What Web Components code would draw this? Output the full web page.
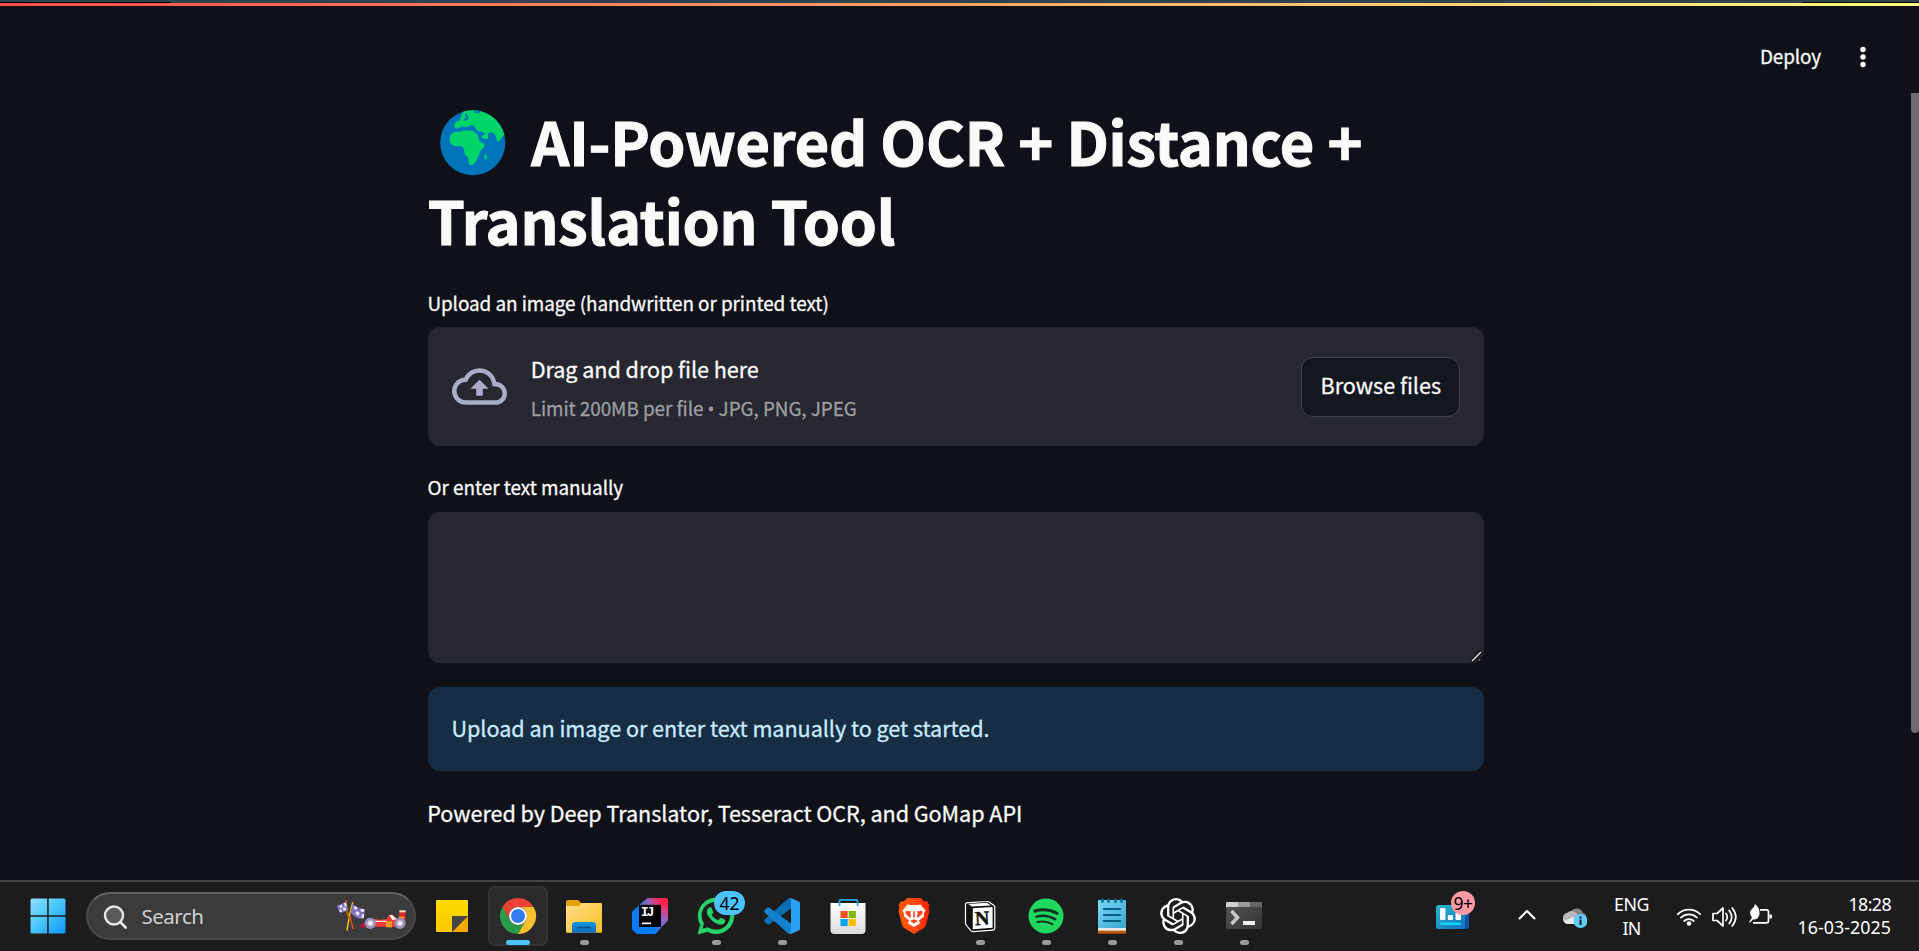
<!DOCTYPE html>
<html lang="en">
<head>
<meta charset="utf-8">
<title>AI-Powered OCR + Distance + Translation Tool</title>
<style>
html,body{margin:0;height:100%;background:#0e1117;overflow:hidden}
</style>
</head>
<body>
<desk-screen></desk-screen>
<script>
const define = (name, html, setup) => {
  const t = document.createElement('template');
  t.innerHTML = html;
  customElements.define(name, class extends HTMLElement {
    constructor() {
      super();
      this.attachShadow({mode: 'open'}).append(t.content.cloneNode(true));
    }
    connectedCallback() { if (setup) setup(this, this.shadowRoot); }
  });
};

/* One line of text whose tracking is adjusted to a given advance width. */
define('fit-text', `<style>:host{display:block;white-space:nowrap}span{display:inline-block}</style><span><slot></slot></span>`,
  (el, root) => {
    const span = root.querySelector('span');
    const want = parseFloat(el.getAttribute('w'));
    const n = el.textContent.length;
    const fit = () => {
      span.style.letterSpacing = '0px';
      const have = span.getBoundingClientRect().width;
      if (have) span.style.letterSpacing = ((want - have) / n) + 'px';
    };
    fit();
    requestAnimationFrame(fit);
  });

/* Taskbar and page artwork. */
const ICONS = {
  start: `<defs><linearGradient id="a" x1="0" y1="0" x2="36" y2="36" gradientUnits="userSpaceOnUse"><stop offset="0" stop-color="#8fe0ff"/><stop offset=".45" stop-color="#4cc9fb"/><stop offset="1" stop-color="#0a94f8"/></linearGradient></defs><path fill="url(#a)" d="M2 .5h15.200V17.200H.5V2A1.500 1.500 0 0 1 2 .5zM18.700.5H34A1.500 1.500 0 0 1 35.500 2v15.200H18.700zM.5 18.700h16.700v16.800H2A1.500 1.500 0 0 1 .5 34zM18.700 18.700h16.800V34a1.500 1.500 0 0 1-1.500 1.500H18.700z"/>`,
  sticky: `<defs><linearGradient id="a" x1="0" y1="0" x2="0" y2="1"><stop offset="0" stop-color="#ffdc00"/><stop offset="1" stop-color="#fbc800"/></linearGradient></defs><path fill="url(#a)" d="M3 2h30a1 1 0 0 1 1 1v15L18 34H3a1 1 0 0 1-1-1V3a1 1 0 0 1 1-1z"/><path fill="#f4a900" d="M34 18v15a1 1 0 0 1-1 1H18z"/><path fill="#454545" d="M18 34V19a1 1 0 0 1 1-1h15z"/>`,
  chrome: `<path fill="#ea4335" d="M18 9H33.600A18 18 0 0 0 2.400 9L10.200 22.500A9 9 0 0 1 18 9z"/><path fill="#2a9b48" d="M2.400 9A18 18 0 0 0 18 36L25.800 22.500A9 9 0 0 1 10.200 22.500z"/><path fill="#fbc02d" d="M18 9H33.600A18 18 0 0 1 18 36L25.800 22.500A9 9 0 0 0 18 9z"/><circle cx="18" cy="18" r="9" fill="#fff"/><circle cx="18" cy="18" r="7" fill="#2e7cee"/>`,
  folder: `<defs><linearGradient id="a" x1="0" y1="0" x2="1" y2="1"><stop offset="0" stop-color="#ffe08a"/><stop offset="1" stop-color="#fbbd20"/></linearGradient><linearGradient id="b" x1="0" y1="0" x2="0" y2="1"><stop offset="0" stop-color="#1597dc"/><stop offset="1" stop-color="#0a6cba"/></linearGradient></defs><path fill="#e3a008" d="M0 3.500A1.500 1.500 0 0 1 1.500 2h9.500c1 0 1.600.4 2.300 1.100L16 6v6H0z"/><path fill="url(#a)" d="M0 8h11.500c1 0 1.600-.4 2.300-1.100L15.500 5H35a1 1 0 0 1 1 1v27.500a1.300 1.300 0 0 1-1.300 1.300H1.300A1.300 1.300 0 0 1 0 33.500z"/><path fill="url(#b)" d="M6 34.800V27a3 3 0 0 1 3-3h18a3 3 0 0 1 3 3v7.800z"/><path stroke="#074f8c" stroke-width="1.500" d="M11 29.500h14"/>`,
  idea: `<defs><linearGradient id="a" x1="7" y1="8" x2="30" y2="3" gradientUnits="userSpaceOnUse"><stop offset="0" stop-color="#2d72e6"/><stop offset=".45" stop-color="#9a62b4"/><stop offset=".85" stop-color="#f52c62"/><stop offset="1" stop-color="#ff2350"/></linearGradient><linearGradient id="b" x1="33" y1="7" x2="27" y2="34" gradientUnits="userSpaceOnUse"><stop offset="0" stop-color="#ff2858"/><stop offset=".5" stop-color="#9a62c8"/><stop offset="1" stop-color="#3a78ee"/></linearGradient></defs><path fill="url(#a)" d="M7 7L14 1.200A3 3 0 0 1 16 0h18a2 2 0 0 1 2 2v8H7z"/><path fill="url(#b)" d="M28 7h8v15.500L24 35V28h4z"/><path fill="#087cfa" d="M0 14.500A2 2 0 0 1 .7 13L8 6.500V28h17.500v6L23.500 36H5L0 31.500z"/><path d="M7 6.800h22V29H7z"/><path fill="#fff" d="M10 24.500h9v1.700h-9z"/><text x="9" y="18.400" fill="#fff" font-family="Liberation Mono,monospace" font-weight="700" font-size="12.500" letter-spacing="-1.800">IJ</text>`,
  whatsapp: `<g transform="scale(1.500)" fill="#25d366"><path stroke="#25d366" stroke-width=".25" d="M17.472 14.382c-.297-.149-1.758-.867-2.030-.967-.273-.099-.471-.148-.67.15-.197.297-.767.966-.94 1.164-.173.199-.347.223-.644.075-.297-.15-1.255-.463-2.390-1.475-.883-.788-1.480-1.761-1.653-2.059-.173-.297-.018-.458.13-.606.134-.133.298-.347.446-.52.149-.174.198-.298.298-.497.099-.198.05-.371-.025-.52-.075-.149-.669-1.612-.916-2.207-.242-.579-.487-.5-.669-.51-.173-.008-.371-.01-.57-.01-.198 0-.52.074-.792.372-.272.297-1.040 1.016-1.040 2.479 0 1.462 1.065 2.875 1.213 3.074.149.198 2.096 3.200 5.077 4.487.709.306 1.262.489 1.694.625.712.227 1.360.195 1.871.118.571-.085 1.758-.719 2.006-1.413.248-.694.248-1.289.173-1.413-.074-.124-.272-.198-.57-.347"/><path stroke="#25d366" stroke-width=".5" d="M12.051 21.400a9.500 9.500 0 0 1-5.035-1.400l-.361-.214-4 1.050 1.050-3.900-.235-.374a9.500 9.500 0 0 1-1.400-4.800c.001-5.200 4.436-9.500 9.888-9.500 2.640 0 5.122 1.030 6.800 2.700a9.500 9.500 0 0 1 2.800 6.800c-.003 5.250-4.300 9.638-9.500 9.638M20.464 3.488A11.815 11.815 0 0 0 12.050 0C5.495 0 .16 5.335.157 11.892c0 2.096.547 4.142 1.588 5.945L.057 24l6.305-1.654a11.882 11.882 0 0 0 5.683 1.448h.005c6.554 0 11.890-5.335 11.893-11.893a11.821 11.821 0 0 0-3.480-8.413Z"/></g>`,
  vscode: `<path fill="#0b6cb4" d="M27 0v10.500L5.500 26.200a2 2 0 0 1-2.500-.1L.8 24a1.900 1.900 0 0 1 0-2.800L24 .800z"/><path fill="#1482cf" d="M27 36V25.500L5.500 9.700a2 2 0 0 0-2.500.1L.8 11.900a1.900 1.900 0 0 0 0 2.800L24 35.200z"/><path fill="#2aa2f2" d="M24.500.8C25.500 0 26.500-.3 27.500.2L35 3.800a1.800 1.800 0 0 1 1 1.600v25.200a1.800 1.800 0 0 1-1 1.600l-7.500 3.600c-1 .5-2 .2-3-.6 1 .5 2.500 0 2.500-1.600V2.400C27 .9 25.500.2 24.500.8z"/>`,
  store: `<defs><linearGradient id="a" x1="0" y1="0" x2="0" y2="1"><stop offset="0" stop-color="#fff"/><stop offset="1" stop-color="#dcdcdc"/></linearGradient></defs><path fill="url(#a)" d="M.5 5h35v27a4 4 0 0 1-4 4h-27a4 4 0 0 1-4-4z"/><path fill="none" stroke="#2ba5e0" stroke-width="1.800" d="M9.500 8V3A1.200 1.200 0 0 1 10.700 1.800h15.600A1.200 1.200 0 0 1 27.500 3v5"/><path fill="#f25022" d="M10.500 13h7.200v7h-7.200z"/><path fill="#7fba00" d="M18.700 13h7.200v7h-7.200z"/><path fill="#00a4ef" d="M10.500 21h7.200v7h-7.200z"/><path fill="#ffb900" d="M18.700 21h7.200v7h-7.200z"/>`,
  brave: `<defs><linearGradient id="a" x1="0" y1="0" x2="1" y2="0"><stop offset="0" stop-color="#ff5a00"/><stop offset=".5" stop-color="#ff4a12"/><stop offset="1" stop-color="#ff2000"/></linearGradient></defs><path fill="url(#a)" d="M11 0h14l3 3.500 3-.3 2.500 4-1 2.800 1 3-3.300 13.200c-.5 1.700-1.400 3-2.800 4L18 36l-9.400-5.800c-1.400-1-2.300-2.300-2.800-4L2.500 13l1-3-1-2.800 2.500-4 3 .3z"/><path fill="#fff" d="M11.500 6.500l3 .6h7l3-.6 5 5.900-1.800 3.600.5 2.200-5.200 4.200 1 3.200-6 3.400-6-3.400 1-3.200-5.200-4.200.5-2.200-1.800-3.600z"/><path fill="#ff461c" d="M10 12.800l5.500.8-1.300 1.300.9 3.700-1 1.200-3.300-2.800-1.500-2.300zM26 12.800l-5.500.8 1.300 1.300-.9 3.700 1 1.200 3.300-2.800 1.500-2.300zM14 23l4-1.700 4 1.700-4 2.600zM17.400 13h1.200l.3 5.800-.9 1.200-.9-1.200z"/>`,
  notion: `<path fill="#111" stroke="#fff" stroke-width="1.200" stroke-linejoin="round" d="M4.500 4.800L24.500 3.500a4 4 0 0 1 2.500.6l5 3.400a2 2 0 0 1 .8 1.700v20.500a2.500 2.500 0 0 1-2.300 2.500L11.500 33.600a3.500 3.500 0 0 1-3-1.200L4.200 27a3 3 0 0 1-.7-2V6.500a1.700 1.700 0 0 1 1-1.700z"/><path fill="#fff" d="M6.200 5.900l18.700-1.200 4 2.700L10 8.600zM10.800 10.200L30.600 9v20.800L10.800 31.200z"/><text x="13" y="26.800" font-family="Liberation Serif,serif" font-weight="700" font-size="20" fill="#111" stroke="#111" stroke-width=".5" transform="rotate(-3 20 20)">N</text>`,
  spotify: `<circle cx="18" cy="18" r="17.500" fill="#1fd760"/><path fill="none" stroke="#10351c" stroke-width="3.200" stroke-linecap="round" d="M7 13c7-2 15-1.500 22 2.300"/><path fill="none" stroke="#10351c" stroke-width="2.500" stroke-linecap="round" d="M8.500 18.600c6-1.600 12.500-1 18.500 2.500"/><path fill="none" stroke="#10351c" stroke-width="2" stroke-linecap="round" d="M9.500 24c5.200-1.200 10.500-.6 15 2.100"/>`,
  notepad: `<defs><linearGradient id="a" x1="0" y1="0" x2="1" y2="1"><stop offset="0" stop-color="#7cdafa"/><stop offset="1" stop-color="#37a5cf"/></linearGradient></defs><path fill="#b65b0b" d="M4 30h28v4.800a1 1 0 0 1-1 1H5a1 1 0 0 1-1-1z"/><path fill="#e8e8e8" d="M4 28h28v4.700H4z"/><path fill="url(#a)" d="M5 2h26a1 1 0 0 1 1 1v27H4V3a1 1 0 0 1 1-1z"/><path stroke="#0a5f87" stroke-width="1.800" stroke-linecap="round" d="M9.700 11h16.600M9.700 17h16.600M9.700 23h16.600"/><path stroke="#0a6f96" stroke-width="2.800" stroke-linecap="round" d="M8.500 2v1.500M14.500 2v1.500M21.500 2v1.500M27.500 2v1.500"/>`,
  gpt: `<g transform="scale(1.500)"><path fill="#fff" d="M22.2819 9.8211a5.9847 5.9847 0 0 0-.5157-4.9108 6.0462 6.0462 0 0 0-6.5098-2.9A6.0651 6.0651 0 0 0 4.9807 4.1818a5.9847 5.9847 0 0 0-3.9977 2.9 6.0462 6.0462 0 0 0 .7427 7.0966 5.98 5.98 0 0 0 .511 4.9107 6.051 6.051 0 0 0 6.5146 2.9001A5.9847 5.9847 0 0 0 13.2599 24a6.0557 6.0557 0 0 0 5.7718-4.2058 5.9894 5.9894 0 0 0 3.9977-2.9001 6.0557 6.0557 0 0 0-.7475-7.0729zm-9.022 12.6081a4.4755 4.4755 0 0 1-2.8764-1.0408l.1419-.0804 4.7783-2.7582a.7948.7948 0 0 0 .3927-.6813v-6.7369l2.02 1.1686a.071.071 0 0 1 .038.052v5.5826a4.504 4.504 0 0 1-4.4945 4.4944zm-9.6607-4.1254a4.4708 4.4708 0 0 1-.5346-3.0137l.142.0852 4.783 2.7582a.7712.7712 0 0 0 .7806 0l5.8428-3.3685v2.3324a.0804.0804 0 0 1-.0332.0615L9.74 19.9502a4.4992 4.4992 0 0 1-6.1408-1.6464zM2.3408 7.8956a4.485 4.485 0 0 1 2.3655-1.9728V11.6a.7664.7664 0 0 0 .3879.6765l5.8144 3.3543-2.0201 1.1685a.0757.0757 0 0 1-.071 0l-4.8303-2.7865A4.504 4.504 0 0 1 2.3408 7.872zm16.5963 3.8558L13.1038 8.364 15.1192 7.2a.0757.0757 0 0 1 .071 0l4.8303 2.7913a4.4944 4.4944 0 0 1-.6765 8.1042v-5.6772a.79.79 0 0 0-.407-.667zm2.0107-3.0231l-.142-.0852-4.7735-2.7818a.7759.7759 0 0 0-.7854 0L9.409 9.2297V6.8974a.0662.0662 0 0 1 .0284-.0615l4.8303-2.7866a4.4992 4.4992 0 0 1 6.6802 4.66zM8.3065 12.863l-2.02-1.1638a.0804.0804 0 0 1-.038-.0567V6.0742a4.4992 4.4992 0 0 1 7.3757-3.4537l-.142.0805L8.704 5.459a.7948.7948 0 0 0-.3927.6813zm1.0976-2.3654l2.602-1.4998 2.6069 1.4998v2.9994l-2.5974 1.4997-2.6067-1.4997Z"/></g>`,
  terminal: `<defs><linearGradient id="a" x1="0" y1="0" x2="1" y2="1"><stop offset="0" stop-color="#545454"/><stop offset="1" stop-color="#353535"/></linearGradient></defs><path fill="url(#a)" d="M0 5a1 1 0 0 1 1-1h34a1 1 0 0 1 1 1v25a1 1 0 0 1-1 1H1a1 1 0 0 1-1-1z"/><path fill="#cfcfcf" d="M0 5a1 1 0 0 1 1-1h11v5H0z"/><path fill="#999" d="M12 4h12v5H12z"/><path fill="#666" d="M24 4h11a1 1 0 0 1 1 1v4H24z"/><path fill="none" stroke="#c8c8c8" stroke-width="3.600" d="M5.500 13l6 6.500-6 6.500"/><path fill="#eee" d="M17 23h12v4H17z"/>`,
  search: `<circle cx="15" cy="13.500" r="9" fill="#5a5a5a" stroke="#e4e8ea" stroke-width="2.400"/><path stroke="#e4e8ea" stroke-width="2.600" stroke-linecap="round" d="M21.700 20.500l5 5"/>`,
  chevron: `<path fill="none" stroke="#fff" stroke-width="2.100" stroke-linecap="round" stroke-linejoin="round" d="M10.500 21.500L18 14l7.500 7.500"/>`,
};
define('app-icon', `<style>:host{display:block;width:36px;height:36px;flex:none}svg{display:block;width:100%;height:100%;overflow:visible}</style><svg viewBox="0 0 36 36"></svg>`,
  (el, root) => { root.querySelector('svg').innerHTML = ICONS[el.getAttribute('name')]; });

define('task-button', `<style>
:host{display:grid;grid-template-rows:60px;width:60px;margin:0 3px;flex:none;place-items:center;position:relative}
.tile{box-sizing:border-box;width:60px;height:60px;border-radius:7px;display:flex;flex-direction:column;align-items:center;padding-top:12px;border:0}
.bar{height:5px;width:9px;border-radius:3px;background:#9a9a9a;margin-top:6px;visibility:hidden}
:host([running]) .bar,:host([active]) .bar{visibility:visible}
:host([active]) .bar{width:24px;background:#4cc2ff}
:host([active]) .tile{background:#2a2a2a;box-shadow:inset 0 0 0 2px #333}
</style><div class="tile"><slot></slot><div class="bar"></div></div><slot name="badge"></slot>`);

define('count-badge', `<style>
:host{position:absolute;left:28px;top:5px;width:31px;height:24px;border-radius:12px;background:#4cc2ff;color:#000;display:flex;justify-content:center;font:17.500px/24px "Noto Sans","Open Sans",sans-serif}
:host([alert]){left:19px;top:-14px;width:24px;background:#ff99a4}
</style><slot></slot>`);

define('search-box', `<style>
:host{box-sizing:border-box;display:flex;align-items:center;width:330px;height:48px;border-radius:24px;background:#3b3b3b;border:2px solid #484848;border-top-color:#606060;margin:0 3px 0 20px;padding-left:10.500px;flex:none}
fit-text{font:20.500px/44px "Noto Sans","Open Sans",sans-serif;color:#d0d0d0;margin-left:9px;padding-bottom:1px;width:133px}
svg{display:block;margin-left:61px}
</style><app-icon name="search" style="margin:7px -2px 0 0"></app-icon><fit-text w="62">Search</fit-text>
<svg width="70" height="36" viewBox="0 0 210 108" style="margin-left:61px">
<g stroke-width="4.500" stroke-linecap="round"><path stroke="#e05310" d="M30 8l4 44M42 55l9 36"/><path stroke="#f2c010" d="M50 14l-9 36-8 46"/><path stroke="#b4650f" d="M32 35l9 30"/></g>
<path fill="#8173bd" d="M2 23q13-2 25-12l10 22q-13 14-27 10zM50 17q12 14 36 16l-3 29q-22 3-39-18z"/>
<g fill="#eee8ff"><path d="M10 23l7-3 3 8-7 3zM24 14l6 2 3 9-7 0zM20 31l8-4 3 9-8 2zM10 36l7-2 1 7-7 1zM56 24l9 4-4 8-8-5zM74 32l11 2-1 9-10-3zM62 39l9 5-3 9-10-6zM78 49l7 0-2 12-8-3z"/></g>
<path fill="#a91c31" d="M68 89l12-15 35-6v18z"/><path fill="#ef3b3a" d="M92 61l38 4 23-2 5-12q12-2 18 5l14 12 3 18H100z"/><path fill="#fff0e6" d="M160 52l8-2 15 14-14 2zM112 68h40v4h-40z"/><path fill="#f59a25" d="M150 70h18v18h-18z"/><path fill="#d92e28" d="M190 42h18v28h-18z"/><path fill="#ffd6c4" d="M190 37h19v6h-19z"/><path fill="#ff9933" d="M188 56h18v5h-18z"/>
<g fill="#9890b8"><circle cx="103" cy="76" r="17"/><circle cx="192" cy="76" r="17"/></g><g fill="#d5d0e5"><circle cx="103" cy="76" r="9"/><circle cx="192" cy="76" r="9"/></g><g fill="#fff"><circle cx="103" cy="76" r="4"/><circle cx="192" cy="76" r="4"/></g></svg>`);

define('system-tray', `<style>
:host{display:flex;align-items:center;height:68px;margin-left:auto;color:#fff;font:17.800px/23.500px "Noto Sans","Open Sans",sans-serif}
svg{display:block;flex:none}
.w{position:relative;width:34px;height:24px;margin:2px 48px 0 0}
.col{display:flex;flex-direction:column;align-items:center}
.time{align-items:flex-end;margin:0 28px 0 24px;width:94px}
</style>
<div class="w"><svg width="34" height="24" viewBox="0 0 34 24"><defs><linearGradient id="a" x1="0" y1="0" x2="1" y2="1"><stop offset="0" stop-color="#27b5c9"/><stop offset="1" stop-color="#1371c4"/></linearGradient></defs><path fill="#0d55a3" d="M10 0h20a3 3 0 0 1 3 3v18a3 3 0 0 1-3 3H10z"/><rect width="29" height="24" rx="2.500" fill="url(#a)"/><g fill="#f3fbff"><rect x="4" y="3" width="5.500" height="12" rx="1"/><rect x="11.800" y="10" width="5.200" height="5" rx="1"/><rect x="19.500" y="7" width="5.500" height="8" rx="1"/></g><rect x="4" y="17.500" width="21" height="2.500" rx="1" fill="#12d3f2"/></svg><count-badge alert style="left:15px"><span style="letter-spacing:-.5px">9+</span></count-badge></div>
<app-icon name="chevron" style="margin:-2px 18px 0 -9px"></app-icon>
<svg width="24" height="22" viewBox="0 0 24 22" style="margin:4px 27px 0 0"><path fill="#868686" d="M8 4a7 7 0 0 1 12 2q4 1 3 6L10 9z"/><path fill="#bababa" d="M0 11a5 5 0 0 1 4-5 6 6 0 0 1 9 0l5 6-5 5H5a5 5 0 0 1-5-6z"/><path fill="#e9e9e9" d="M1 14l9-4 4 7H5q-3 0-4-3z"/><circle cx="17.500" cy="14" r="7" fill="#60cdff"/><path fill="#1b1b1b" d="M16.500 12.500h2V18h-2zM16.500 9.500h2v2h-2z"/></svg>
<div class="col" style="margin:1px 27px 0 0;width:35px"><fit-text w="35">ENG</fit-text><fit-text w="18">IN</fit-text></div>
<svg width="26" height="24" viewBox="0 0 26 24" style="margin:1px 10px 0 0"><g fill="none" stroke="#fff" stroke-width="1.800" stroke-linecap="round"><path d="M1.800 9.200a16 16 0 0 1 22.400 0M5 12.600a11.500 11.500 0 0 1 16 0M8.200 16a7 7 0 0 1 9.600 0"/></g><circle cx="13" cy="18.500" r="2.300" fill="#fff"/></svg>
<svg width="25" height="24" viewBox="0 0 25 24" style="margin:1px 11px 0 0"><g fill="none" stroke="#fff" stroke-width="1.700" stroke-linecap="round" stroke-linejoin="round"><path d="M1 8.500h4l6-5.500v18l-6-5.500H1zM14 8.500q2.500 3.500 0 7M17.200 5.500q5 6.500 0 13M20.200 3q7.200 9 0 18"/></g></svg>
<svg width="25" height="24" viewBox="0 0 25 24" style="margin-top:-2px"><g fill="none" stroke="#fff" stroke-width="1.700" stroke-linejoin="round"><path d="M12 6.800h6.500a2 2 0 0 1 2 2v9a2 2 0 0 1-2 2H5"/></g><path fill="#fff" d="M21.500 11.500h1.500a1 1 0 0 1 1 1v2a1 1 0 0 1-1 1h-1.500zM7 1q5 4 4.500 10-1 6-6.500 5.500l-3 3-1-.5 3-4.500Q0 9 4 6q2-1 3-5z"/></svg>
<div class="col time"><fit-text w="42.500">18:28</fit-text><fit-text w="93.500">16-03-2025</fit-text></div>`);

define('task-bar', `<style>
:host{box-sizing:border-box;display:flex;align-items:center;height:71px;background:#1c1c1c;border-top:2px solid #444;padding:0 0 1px 30px}
nav{display:flex}
</style>
<app-icon name="start"></app-icon><search-box></search-box>
<nav>
<task-button><app-icon name="sticky"></app-icon></task-button>
<task-button active><app-icon name="chrome"></app-icon></task-button>
<task-button running><app-icon name="folder"></app-icon></task-button>
<task-button><app-icon name="idea"></app-icon></task-button>
<task-button running><app-icon name="whatsapp"></app-icon><count-badge slot="badge">42</count-badge></task-button>
<task-button running><app-icon name="vscode"></app-icon></task-button>
<task-button><app-icon name="store"></app-icon></task-button>
<task-button><app-icon name="brave"></app-icon></task-button>
<task-button running><app-icon name="notion"></app-icon></task-button>
<task-button running><app-icon name="spotify"></app-icon></task-button>
<task-button running><app-icon name="notepad"></app-icon></task-button>
<task-button running><app-icon name="gpt"></app-icon></task-button>
<task-button running><app-icon name="terminal"></app-icon></task-button>
</nav><system-tray></system-tray>`);

define('page-title', `<style>
:host{display:block;font-weight:700;font-size:59.400px;line-height:79.200px;color:#fafafa;-webkit-text-stroke:1.100px #fafafa}
h1{margin:0;font:inherit}.row{display:flex;align-items:center}
svg{display:block;margin:6px 25.800px 0 12px;flex:none}
.l2{margin-left:-.3px}
</style><h1><div class="row"><svg width="65.500" height="65.500" viewBox="60 59 197 197"><defs><clipPath id="c"><circle cx="158.500" cy="157.500" r="98"/></clipPath></defs><circle cx="158.500" cy="157.500" r="98" fill="#0074ba"/>
<g clip-path="url(#c)"><path fill="#00d56a" d="M103 126C110 122 120 126 122 124 128 117 145 124 158 120 160 128 170 126 174 134 180 145 178 158 192 158 198 162 192 172 184 180 176 186 182 192 174 200 172 210 164 222 154 225 146 226 146 210 144 200 140 195 134 196 134 188 134 178 130 168 120 167 108 170 94 166 90 155 86 140 92 130 103 126Z"/>
<path fill="#00d56a" d="M133 55H215L265 80 260 134 252 134C246 141 242 150 236 154 230 154 230 147 229 140 226 130 218 126 209 127 201 129 206 138 204 145 200 149 196 145 190 146 182 142 184 136 192 134 200 128 186 124 174 122 168 116 166 110 158 104 152 102 153 110 146 110 138 112 130 106 122 110 116 116 104 116 103 107 104 98 108 91 118 92 128 94 134 90L130 84C128 74 134 66 133 55Z"/>
<path fill="none" stroke="#0074ba" stroke-width="6" stroke-linecap="round" stroke-linejoin="round" d="M134 88q10-1 9-8-7-2-4-8M120 119q12-5 22-3 6-10 12-2 6-3 14 5M164 64q8 4 14 0M178 139q3 14 12 17"/>
<ellipse cx="197" cy="200" rx="4" ry="8" fill="#00d56a"/></g></svg><fit-text w="831">AI-Powered OCR + Distance +</fit-text></div><fit-text class="l2" w="467.500">Translation Tool</fit-text></h1>`);

define('field-label', `<style>:host{display:block;font-size:18.900px;line-height:24px;height:24px;color:#fafafa;text-indent:-.3px}</style><slot></slot>`);

define('file-drop', `<style>
:host{box-sizing:border-box;display:flex;align-items:center;height:119px;border-radius:12px;background:#262730;padding:0 24px}
.t{flex:1;margin:5px 0 0 23.700px;color:#fafafa}
.a{font-size:21.600px;line-height:38px}.b{font-size:18.900px;line-height:40px;color:#9d9da1}
.b span{font-family:"Open Sans",sans-serif;font-size:18.500px;line-height:1}
button{box-sizing:border-box;width:159px;height:60px;border:1px solid #41444c;border-radius:12px;background:#131720;color:#fafafa;font:inherit;-webkit-text-stroke:inherit;font-size:21.600px;line-height:53px;padding:0 0 5px 18.500px;text-align:left}
</style><svg width="55" height="55" viewBox="0 0 24 24" fill="#a9aec6"><path d="M19.350 10.040C18.670 6.590 15.640 4 12 4 9.110 4 6.600 5.640 5.350 8.040 2.340 8.360 0 10.910 0 14c0 3.310 2.690 6 6 6h13c2.760 0 5-2.240 5-5 0-2.640-2.050-4.780-4.650-4.960zM19 18H6c-2.210 0-4-1.790-4-4 0-2.050 1.530-3.760 3.560-3.970l1.070-.11.5-.95C8.080 7.140 9.940 6 12 6c2.620 0 4.880 1.860 5.390 4.430l.3 1.500 1.530.11c1.560.1 2.780 1.410 2.780 2.960 0 1.650-1.350 3-3 3zM8 13h2.550v3h2.900v-3H16l-4-4z"/></svg>
<div class="t"><fit-text class="a" w="228">Drag and drop file here</fit-text><fit-text class="b" w="326">Limit 200MB per file <span>•</span> JPG, PNG, JPEG</fit-text></div>
<button><fit-text w="120.500">Browse files</fit-text></button>`);

define('text-field', `<style>:host{display:flex;align-items:flex-end;justify-content:flex-end;height:151px;border-radius:12px;background:#262730;overflow:hidden}</style>
<svg width="16" height="14" viewBox="0 0 16 14"><path stroke="#0b0c10" stroke-width="4" d="M3.500 12.500L13.500 2.500"/><path stroke="#0b0c10" stroke-width="2.500" d="M9.500 13l4-4"/><path stroke="#d4d4d6" stroke-width="1.700" d="M4 12l9-9M11 12l1.500-1.500"/></svg>`);

define('info-box', `<style>:host{box-sizing:border-box;display:block;height:84px;border-radius:12px;background:#172d43;color:#c7ebff;padding:21px 23.500px;font-size:21.600px;line-height:39px}</style><slot></slot>`);

define('ocr-app', `<style>
:host{display:grid;grid-template-rows:3px 3px 1fr;flex:1;min-height:0;background:#0e1117;color:#fafafa;font-family:"Noto Sans CJK SC","Source Sans Pro",sans-serif;-webkit-text-stroke:.3px}
.edge{background:linear-gradient(#000,#000) 0 2px/171px 1px no-repeat,linear-gradient(#000,#000) 100% 2px/116px 1px no-repeat,#2f414d}
.deco{background:linear-gradient(90deg,#ff4b4b,#fffd80)}
.body{display:grid;grid-template-columns:1fr 8px;grid-template-rows:87px 1fr;min-height:0}
header{grid-column:1/3;display:flex;align-items:center;justify-content:flex-end;padding:14px 51px 0 0;box-sizing:border-box}
header fit-text{font-size:18.900px;line-height:26px;width:61px;margin-right:37px;margin-bottom:1px}
main{display:flex;flex-direction:column;width:1056px;margin-left:428px;padding-top:7.500px}
.bar{background:#6b6b70;height:640px;border-radius:0 0 4px 4px}
</style><div class="edge"></div><div class="deco"></div>
<div class="body"><header><fit-text w="61">Deploy</fit-text><svg width="10" height="24" viewBox="0 0 10 24" fill="#fff"><circle cx="5" cy="4.500" r="2.700"/><circle cx="5" cy="12" r="2.700"/><circle cx="5" cy="19.500" r="2.700"/></svg></header>
<main><page-title></page-title>
<field-label style="margin-top:32px"><fit-text w="401">Upload an image (handwritten or printed text)</fit-text></field-label>
<file-drop style="margin-top:12.100px"></file-drop>
<field-label style="margin-top:29px"><fit-text w="195.500">Or enter text manually</fit-text></field-label>
<text-field style="margin-top:13px"></text-field>
<info-box style="margin-top:24px"><fit-text w="538">Upload an image or enter text manually to get started.</fit-text></info-box>
<fit-text style="font-size:21.600px;line-height:38px;margin:23px 0 0 -.7px" w="595">Powered by Deep Translator, Tesseract OCR, and GoMap API</fit-text>
</main><div class="bar"></div></div>`);

define('desk-screen', `<style>:host{display:flex;flex-direction:column;width:1919px;height:951px;overflow:hidden}</style><ocr-app></ocr-app><task-bar></task-bar>`);
</script>
</body>
</html>
